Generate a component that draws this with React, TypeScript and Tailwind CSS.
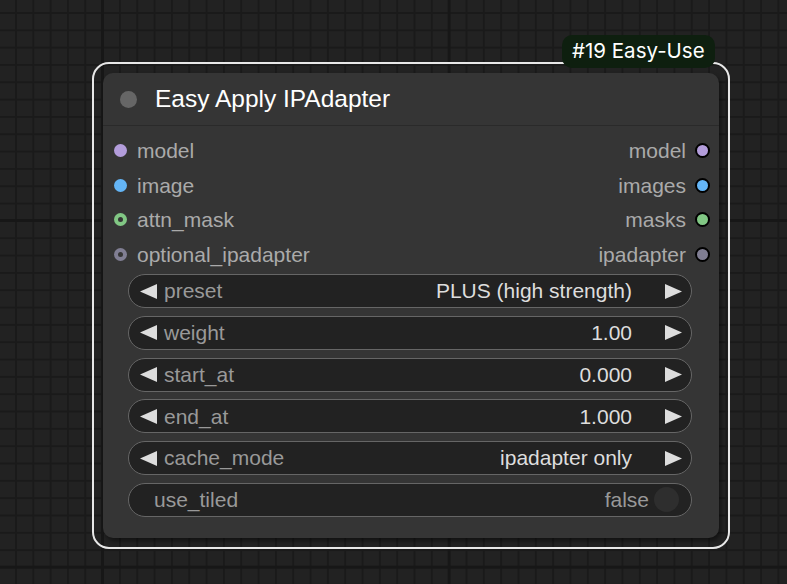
import React from 'react';

type Slot = { name: string; color: string; hollow?: boolean };

const inputs: Slot[] = [
    { name: 'model', color: '#b39ddb' },
    { name: 'image', color: '#64b5f6' },
    { name: 'attn_mask', color: '#81c784', hollow: true },
    { name: 'optional_ipadapter', color: '#807e93', hollow: true },
];

const outputs: Slot[] = [
    { name: 'model', color: '#b39ddb' },
    { name: 'images', color: '#64b5f6' },
    { name: 'masks', color: '#81c784' },
    { name: 'ipadapter', color: '#807e93' },
];

const combos = [
    { label: 'preset', value: 'PLUS (high strength)' },
    { label: 'weight', value: '1.00' },
    { label: 'start_at', value: '0.000' },
    { label: 'end_at', value: '1.000' },
    { label: 'cache_mode', value: 'ipadapter only' },
];

function Arrow({ dir }: { dir: 'left' | 'right' }) {
    return (
        <svg width="17" height="15" viewBox="0 0 17 15" className="shrink-0">
            {dir === 'left'
                ? <polygon points="17,0 17,15 0,7.5" fill="#dddddd" />
                : <polygon points="0,0 0,15 17,7.5" fill="#dddddd" />}
        </svg>
    );
}

function InputDot({ slot }: { slot: Slot }) {
    return (
        <span
            className="w-[13px] h-[13px] rounded-full flex items-center justify-center shrink-0"
            style={{ backgroundColor: slot.color }}
        >
            {slot.hollow && <span className="w-[5px] h-[5px] rounded-full bg-[#353535]" />}
        </span>
    );
}

function OutputDot({ slot }: { slot: Slot }) {
    return (
        <span
            className="w-[15px] h-[15px] rounded-full border-2 border-black shrink-0"
            style={{ backgroundColor: slot.color }}
        />
    );
}

export default function App() {
    return (
        <div
            className="relative w-[787px] h-[584px] overflow-hidden bg-[#222222] bg-[image:linear-gradient(to_right,#171717_3px,transparent_3px),linear-gradient(to_bottom,#171717_3px,transparent_3px),linear-gradient(to_right,#1a1a1a_2px,transparent_2px),linear-gradient(to_bottom,#1a1a1a_2px,transparent_2px)] bg-[size:346.6px_346.6px,346.6px_346.6px,17.33px_17.33px,17.33px_17.33px] bg-[position:101px_219px,101px_219px,15px_12px,15px_12px]"
            style={{ fontFamily: '"Liberation Sans", Arial, sans-serif' }}
        >
            {/* selected node outline */}
            <div className="absolute left-[92px] top-[62px] w-[638px] h-[487px] rounded-[17px] border-2 border-[#e8e8e8] p-[9px]">
                <div className="h-full rounded-[10px] bg-[#353535] shadow-[2px_3px_4px_rgba(0,0,0,0.45)] flex flex-col">
                    {/* Title */}
                    <div className="h-[53px] flex items-center pl-[17px] border-b border-[#2a2a2a] shrink-0">
                        <span className="w-[17px] h-[17px] rounded-full bg-[#666666]" />
                        <span className="ml-[18px] text-[24.5px] text-white">Easy Apply IPAdapter</span>
                    </div>

                    {/* Slots */}
                    <div className="pt-[7.5px] flex flex-col">
                        {inputs.map((inp, i) => (
                            <div key={inp.name} className="h-[34.5px] flex items-center justify-between pl-[10.5px] pr-[9.5px]">
                                <div className="flex items-center gap-[10.5px]">
                                    <InputDot slot={inp} />
                                    <span className="text-[21px] text-[#aaaaaa]">{inp.name}</span>
                                </div>
                                <div className="flex items-center gap-[8.5px]">
                                    <span className="text-[21px] text-[#aaaaaa]">{outputs[i].name}</span>
                                    <OutputDot slot={outputs[i]} />
                                </div>
                            </div>
                        ))}
                    </div>

                    {/* Widgets */}
                    <div className="mt-[2.5px] ml-[25px] mr-[27px] flex flex-col gap-[7.8px]">
                        {combos.map(c => (
                            <div
                                key={c.label}
                                className="h-[34px] rounded-full border border-[#666666] bg-[#222222] flex items-center pl-[11px] pr-[9px]"
                            >
                                <Arrow dir="left" />
                                <span className="ml-[7px] text-[21px] text-[#999999]">{c.label}</span>
                                <span className="ml-auto text-[21px] text-[#dddddd]">{c.value}</span>
                                <span className="ml-[33px]"><Arrow dir="right" /></span>
                            </div>
                        ))}
                        <div className="h-[34px] rounded-full border border-[#666666] bg-[#222222] flex items-center pl-[25px] pr-[12px]">
                            <span className="text-[21px] text-[#999999]">use_tiled</span>
                            <span className="ml-auto text-[21px] text-[#999999]">false</span>
                            <span className="ml-[5px] w-[25px] h-[25px] rounded-full bg-[#2e2e2e]" />
                        </div>
                    </div>
                </div>
            </div>

            {/* badge */}
            <div
                className="absolute left-[562px] top-[35px] h-[33px] px-[10px] rounded-[10px] bg-[#0e1f0f] flex items-center text-[20.5px] text-white"
                style={{ fontFamily: 'Inter, "Noto Sans", sans-serif' }}
            >
                #19 Easy-Use
            </div>
        </div>
    );
}
